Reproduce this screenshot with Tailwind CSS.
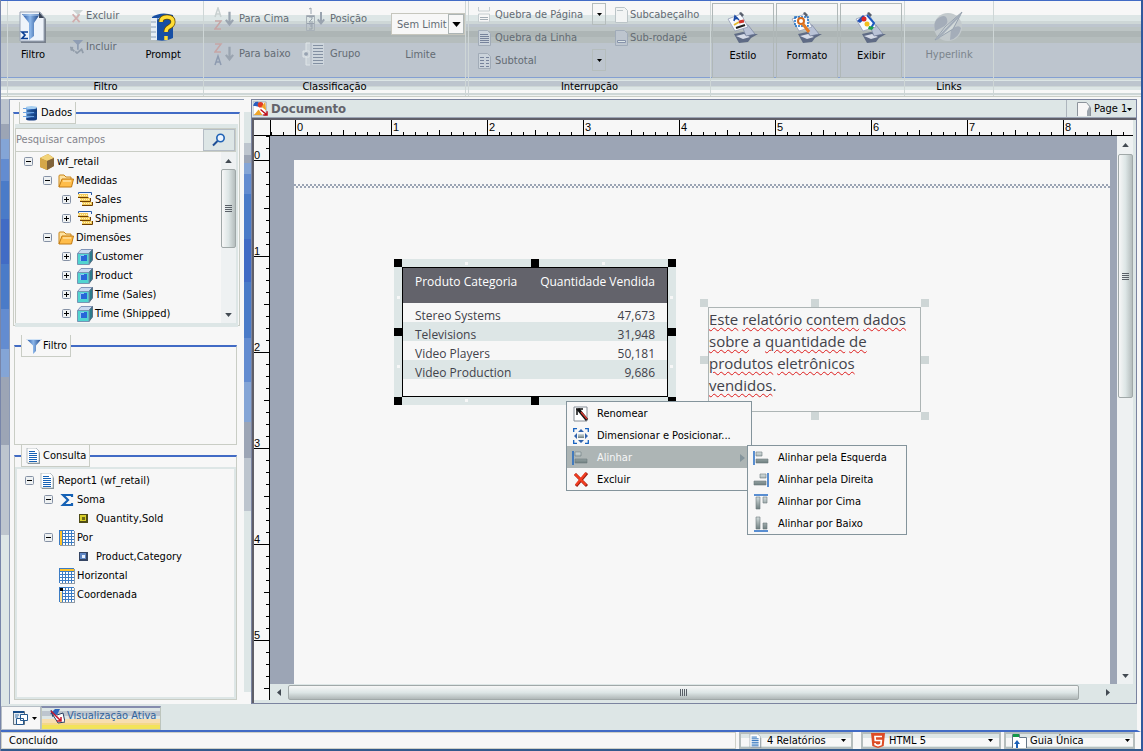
<!DOCTYPE html>
<html lang="pt-BR">
<head>
<meta charset="utf-8">
<title>Documento</title>
<script src="https://cdn.jsdelivr.net/npm/@tailwindcss/browser@4"></script>
</head>
<body class="h-screen overflow-hidden bg-[#dde6e6] font-['DejaVu_Sans_Condensed','Noto_Sans',sans-serif] text-[11px] leading-[14px] text-black">

<svg class="absolute size-0" aria-hidden="true">
  <defs>
    <linearGradient id="metal" x1="0" y1="0" x2="0" y2="1"><stop offset="0" stop-color="#d3dcdc"/><stop offset="1" stop-color="#6f7f80"/></linearGradient>
    <linearGradient id="funnel" x1="0" x2="1"><stop offset="0" stop-color="#1d4f9e"/><stop offset=".45" stop-color="#8db7ea"/><stop offset="1" stop-color="#123c80"/></linearGradient>
    <linearGradient id="drum" x1="0" x2="1"><stop offset="0" stop-color="#7fb2ea"/><stop offset=".5" stop-color="#2b66b5"/><stop offset="1" stop-color="#123c80"/></linearGradient>
    <symbol id="minus" viewBox="0 0 9 9"><rect x=".5" y=".5" width="8" height="8" rx="1" fill="#eef1f2" stroke="#8591a5"/><path d="M2 4.500h5" stroke="#000"/></symbol>
    <symbol id="plus" viewBox="0 0 9 9"><rect x=".5" y=".5" width="8" height="8" rx="1" fill="#eef1f2" stroke="#8591a5"/><path d="M2 4.500h5M4.500 2v5" stroke="#000"/></symbol>
    <symbol id="folder" viewBox="0 0 16 16"><path d="M1 14V3q0-1 1-1h4l2 2h5v3" fill="#ffe2a0" stroke="#c98518"/><path d="M1 14 4 6h11.500l-2 8z" fill="#ffbd4a" stroke="#c27a12"/><path d="m5 8h8" stroke="#fff0c8"/></symbol>
    <symbol id="measure" viewBox="0 0 16 16"><path d="M1.500 3V.5h13V3" fill="none" stroke="#2a5ba8"/><path d="M1 2h10v4H1zM3 6h10v4H3zM5 10h10v4H5z" fill="#f2cb5c"/><path d="M1 3.500h10M3 7.500h10M5 11.500h10" stroke="#fff6c4" stroke-dasharray="1 1"/><path d="M1 5.500h10.500M3 9.500h10.500V6M5 13.500h10.500V10" fill="none" stroke="#6e3e00"/></symbol>
    <symbol id="cube" viewBox="0 0 16 16"><path d="M.5 4.500 4 .5h11.500L12 4.500z" fill="#c9d9f0" stroke="#8195b8"/><path d="m12 4.500 3.500-4v10.500L12 15.500z" fill="#2c7b8c" stroke="#5c7186"/><path d="M.5 4.500H12v11H.5z" fill="#51d4d0" stroke="#7795b4"/><path d="M3 6h7v6H3z" fill="#2866d8"/><path d="M3.500 12V6.500H7" fill="none" stroke="#8fc8f5"/></symbol>
    <symbol id="page" viewBox="0 0 16 16"><path d="M2 1h8l4 4v11H2z" fill="#8b979f"/><path d="M1 0h9l3 3v12H1z" fill="#fff" stroke="#8b98a0" stroke-width=".6"/><path d="M3 3.500h6M3 5.500h8M3 7.500h8M3 9.500h8M3 11.500h8M3 13.500h8" stroke="#1561b5"/></symbol>
    <symbol id="grid" viewBox="0 0 16 16"><path d="M1 1h15v15H1z" fill="#8f9aa6"/><path d="M0 0h15v15H0z" fill="#3c7cc4"/><path d="M1 2h14M1 5h14M1 8h14M1 11h14M1 14h14" stroke="#fff" stroke-width="2" stroke-dasharray="2 1"/></symbol>
    <symbol id="funnelIcon" viewBox="0 0 16 16"><path d="M.5 1h15L10 7.500V13l-3 3V7.500z" fill="url(#funnel)"/><path d="M1 1.500h14" stroke="#cfe2f6"/></symbol>
    <symbol id="down" viewBox="0 0 5 3"><path d="M0 0h5L2.500 3z"/></symbol>
    <symbol id="alignL" viewBox="0 0 16 16"><path d="M1 1v14" stroke="#1561c0" stroke-width="1.400"/><path d="M3 2h6v4H3zM3 9h12v4H3z" fill="url(#metal)" stroke="#6b7b7c" stroke-width=".6"/></symbol>
    <symbol id="tool" viewBox="0 0 32 32"><path d="m7 22 9-2 7 2 8 0-7 4-3 4-9 1z" fill="#5f6b85"/><path d="m9 24 8-2 6 3-7 2z" fill="#d7dce8"/><path d="m15 14 6-1 7 9-9 2z" fill="#b9c2d6" stroke="#6f7b98" stroke-width=".6"/><path d="m1 7 13-5 7 13L8 19z" fill="#f8faff" stroke="#8994ae" stroke-width=".7"/><path d="m12 1 2-1 3 3-2 2z" fill="#59606e"/></symbol>
    <symbol id="sheet" viewBox="0 0 16 16"><path d="M1.500.5h9l3 3v12h-12z" fill="#cbd3db" stroke="#a1abb7"/></symbol>
    <symbol id="arrowDown" viewBox="0 0 10 16"><path d="M5 0v14M1 9l4 5 4-5" fill="none" stroke="#9aa4b0" stroke-width="2.500"/></symbol>
  </defs>
</svg>

<div class="flex h-full flex-col border-r-2 border-l border-r-[#31599c] border-l-[#7785a9]">

  <!-- Ribbon -->
  <header class="flex h-[97px] shrink-0 border-t border-t-[#416bc5] border-b border-b-[#c9cdc5] bg-[linear-gradient(#f7f7f7_0_14px,#dde6e6_14px_20px,#ced7d7_20px_23px,#bdc5ce_23px_26px,#bcc4c4_26px_30px,#adb5b5_30px_36px,#b5bdbd_36px_42px,#bdc5ce_42px_76px,#84a0d2_76px_77px,#ced7d7_77px_79px,#dde6e6_79px_80px,#bdc5ce_80px_85px,#ced7d7_85px_86px,#dde6e6_86px_89px,#f7f7f7_89px_92px,#ced7d7_92px_94px,#eef1f0_94px)] pl-[6px]">
    <section class="flex w-[197px] shrink-0 flex-col border-x border-[#ced6d6]">
      <div class="flex h-[79px]">
        <button class="flex w-[50px] flex-col items-center pt-[10px]">
          <svg class="h-8 w-[28px]" viewBox="0 0 28 32"><path d="M2 2h20l5 6v24H2z" fill="#78808c"/><path d="M1 1h20l4 6v23H1z" fill="#eef3fa" stroke="#98a3b5"/><path d="M20 1v6h5z" fill="#3a4556"/><path d="M3 3h18l-6 9v13l-5 4V12z" fill="url(#funnel)"/><path d="M4 4h16" stroke="#b9d4f2"/><path d="M9 21H3l3 3-3 3.500h6" fill="none" stroke="#0b3f95" stroke-width="1.700"/></svg>
          <span class="mt-[5px]">Filtro</span>
        </button>
        <div class="flex flex-col gap-[17px] pt-[8px] pl-[12px] text-[#636b73]">
          <button class="flex items-center gap-[2px]"><svg class="size-[14px]" viewBox="0 0 16 16"><path d="M3 1h12l-5 5v5H8V6z" fill="#ced6d6"/><path d="m3 6 8 9M11 6l-8 9" stroke="#d0aeae" stroke-width="2"/></svg>Excluir</button>
          <button class="flex items-center gap-[2px]"><svg class="size-[14px]" viewBox="0 0 16 16"><path d="M3 0h12l-5 5v6H8V5z" fill="#8f9db3"/><path d="m0 8 5 5M3 8l-2 4m5 1 2 2 6-5m-1 0 2 5" fill="none" stroke="#929daa" stroke-width="2"/></svg>Incluir</button>
        </div>
        <button class="ml-[19px] flex w-[50px] flex-col items-center pt-[10px]">
          <svg class="h-8 w-[28px]" viewBox="0 0 28 32"><path d="M3 6q9-6 21-2v23q-9 5-21 1z" fill="#174fa4"/><path d="M2 7h6v22H2z" fill="#e5edf5"/><path d="M2 11h5M2 16h5M2 21h5M2 26h5" stroke="#8ca1b8"/><path d="M8 8q10-4 16 0" stroke="#9fc5ee" fill="none"/><path d="M12 11q0-5 6-5 6 0 6 5 0 3-4 5-3 1.500-3 5" fill="none" stroke="#684d00" stroke-width="5"/><path d="M12 11q0-5 6-5 6 0 6 5 0 3-4 5-3 1.500-3 5M17 25v4" fill="none" stroke="#ffdd35" stroke-width="3.500"/></svg>
          <span class="mt-[5px]">Prompt</span>
        </button>
      </div>
      <h2 class="text-center">Filtro</h2>
    </section>

    <section class="flex w-[262px] shrink-0 flex-col border-r border-[#ced6d6]">
      <div class="flex h-[79px] text-[#636b73]">
        <div class="flex w-[98px] flex-col gap-[11px] pt-[6px] pl-[10px]">
          <button class="flex h-6 items-center gap-[5px] whitespace-nowrap"><svg class="h-6 w-5 shrink-0" viewBox="0 0 20 24"><path d="M1 10 4 1l3 9M2 7h4" fill="none" stroke="#c8d0d0" stroke-width="1.500"/><path d="M1 14h6l-6 8h6" fill="none" stroke="#c6a5a5" stroke-width="1.500"/><use href="#arrowDown" x="11" y="4" width="9" height="16"/></svg>Para Cima</button>
          <button class="flex h-6 items-center gap-[5px] whitespace-nowrap"><svg class="h-6 w-5 shrink-0" viewBox="0 0 20 24"><path d="M1 2h6l-6 8h6" fill="none" stroke="#c6a5a5" stroke-width="1.500"/><path d="m1 23 3-9 3 9m-5-3h4" fill="none" stroke="#8e9bb0" stroke-width="1.500"/><use href="#arrowDown" x="11" y="4" width="9" height="16"/></svg>Para baixo</button>
        </div>
        <div class="flex flex-col gap-[11px] pt-[6px]">
          <button class="flex h-6 items-center gap-[4px]"><svg class="h-6 w-6" viewBox="0 0 24 24"><path d="M5 9.500h7M5 16.500h7" stroke="#98a2ad"/><path d="M7 2 9 1v6m-2 3h3v2l-3 3h4m-4 2h3v2H8m2 0v3H7" fill="none" stroke="#98a2ad"/><path d="M4.500 8.500h8v15h-8z" fill="none" stroke="#a8b1b8"/><use href="#arrowDown" x="15" y="5" width="8" height="13"/></svg>Posição</button>
          <button class="flex h-6 items-center gap-[4px]"><svg class="h-6 w-6" viewBox="0 0 24 24"><path d="M8 1H4v22h4M1 9h6v6H1z" fill="#dfe5e8" fill-opacity=".4" stroke="#dfe5e8"/><path d="M10 1h12v22H10z" fill="#cdd5dc"/><path d="M11 3.500h10M11 6.500h10M11 9.500h10M11 12.500h10M11 15.500h10M11 18.500h10M11 21.500h10M2 12h4M4 10v4" stroke="#8390a2"/></svg>Grupo</button>
        </div>
        <div class="ml-auto flex w-[74px] flex-col gap-[13px] pt-[12px]">
          <label class="relative flex h-[22px] items-center border border-[#c6c6bd] bg-[#f7f7f7]">
            <select aria-label="Limite" class="h-full w-full appearance-none pt-px pl-[5px] text-[11px]"><option>Sem Limit</option></select>
            <span class="pointer-events-none absolute right-0 flex h-5 w-4 items-center justify-center border border-[#adb5b5] bg-[#f7f7f7]"><svg class="h-[5px] w-[9px] fill-black"><use href="#down"/></svg></span>
          </label>
          <span class="pr-[15px] text-center">Limite</span>
        </div>
      </div>
      <h2 class="text-center">Classificação</h2>
    </section>

    <section class="ml-[2px] flex w-[243px] shrink-0 flex-col border-x border-[#ced6d6]">
      <div class="flex h-[79px] text-[#636b73]">
        <div class="flex w-[123px] flex-col gap-[7px] pt-[6px] pl-[8px]">
          <button class="flex h-4 items-center gap-[2px] whitespace-nowrap"><svg class="size-4 shrink-0" viewBox="0 0 16 16"><path d="M1.500 0v4h11V0m-11 15V7h11v8z" fill="#f7f7f7" stroke="#c5cdd0"/><path d="M3 10.500h8M3 12.500h8" stroke="#a3adb5"/></svg>Quebra de Página</button>
          <button class="flex h-4 items-center gap-[2px] whitespace-nowrap"><svg class="size-4 shrink-0" viewBox="0 0 16 16"><use href="#sheet"/><path d="M3 4.500h8M3 6.500h9M3 8.500h9M3 10.500h9M3 12.500h9" stroke="#77839b"/></svg>Quebra da Linha</button>
          <button class="flex h-4 items-center gap-[2px] whitespace-nowrap"><svg class="size-4 shrink-0" viewBox="0 0 16 16"><use href="#sheet"/><path d="M3 4.500h4m2 0h3M3 7.500h4m2 0h3M3 10.500h4m2 0h3M3 13.500h4m2 0h3" stroke="#77839b"/></svg>Subtotal</button>
        </div>
        <div class="flex w-[14px] flex-col gap-6 pt-[2px]">
          <button aria-label="Opções de quebra de página" class="flex h-[22px] items-center justify-center border border-[#b5bdbd]"><svg class="h-[3px] w-[5px] fill-black"><use href="#down"/></svg></button>
          <button aria-label="Opções de subtotal" class="flex h-[22px] items-center justify-center border border-[#b5bdbd]"><svg class="h-[3px] w-[5px] fill-black"><use href="#down"/></svg></button>
        </div>
        <div class="flex flex-col gap-[7px] pt-[6px] pl-[8px]">
          <button class="flex h-4 items-center"><svg class="size-4" viewBox="0 0 16 16"><path d="M1.500.5h9l3 3v12h-12z" fill="#f2f4f4" stroke="#bcc5c8"/><path d="M3 3.500h6" stroke="#bcc5c8"/></svg>Subcabeçalho</button>
          <button class="flex h-4 items-center"><svg class="size-4" viewBox="0 0 16 16"><path d="M1.500.5h9l3 3v12h-12z" fill="#bdc5ce" stroke="#a0abb9"/><path d="M3.500 10.500h8v2h-8z" fill="#dde6e6" stroke="#8793aa"/></svg>Sub-rodapé</button>
        </div>
      </div>
      <h2 class="text-center">Interrupção</h2>
    </section>

    <div class="ml-[1px] flex h-[77px] shrink-0 gap-[2px] pt-[2px] pr-[2px]">
      <button class="flex w-[62px] flex-col items-center border border-[#b0b8b8] pt-[8px]">
        <svg class="h-8 w-8" viewBox="0 0 32 32"><use href="#tool"/><path d="m7 9 1-5 4 4M8 7l3-1" stroke="#1646a2" stroke-width="1.500" fill="none"/><path d="m7 13 5-3" stroke="#e5b92c" stroke-width="2"/><path d="m12 10 5-1" stroke="#d1352c" stroke-width="3"/><path d="m9 16 9-3" stroke="#222" stroke-width="2"/></svg>
        <span class="mt-[5px]">Estilo</span></button>
      <button class="flex w-[62px] flex-col items-center border border-[#b0b8b8] pt-[8px]">
        <svg class="h-8 w-8" viewBox="0 0 32 32"><use href="#tool"/><path d="M4 5h13v9H4z" fill="none" stroke="#1b6fc4" stroke-width="1.500" stroke-dasharray="2 1"/><circle cx="10" cy="9" r="3" fill="#fff" stroke="#d66b1d" stroke-width="2"/><path d="m12 12 6 8" stroke="#e47b25" stroke-width="3"/></svg>
        <span class="mt-[5px]">Formato</span></button>
      <button class="flex w-[62px] flex-col items-center border border-[#b0b8b8] pt-[8px]">
        <svg class="h-8 w-8" viewBox="0 0 32 32"><use href="#tool"/><path d="m2 9 6-6 3 3-6 5z" fill="#1f4fb5"/><circle cx="9" cy="7" r="2.500" fill="#dc2525"/><circle cx="12" cy="12" r="2.500" fill="#f3bf1e"/><path d="m12 3 7 8-3 5" fill="none" stroke="#1c59c1" stroke-width="2"/><path d="m14 14 5 1-2 3-4-1z" fill="#1da54a"/></svg>
        <span class="mt-[5px]">Exibir</span></button>
    </div>

    <section class="flex w-[90px] shrink-0 flex-col border-x border-[#ced6d6]">
      <div class="h-[79px]">
        <button class="flex w-full flex-col items-center pt-[10px] text-[#7b848c]">
          <svg class="h-8 w-8" viewBox="0 0 32 32"><circle cx="15" cy="16" r="14" fill="#c3cacd"/><path d="M4 8q8-6 10 0t-6 9l-6 3Q0 12 4 8zm14 10q8-5 10-1-2 10-11 12z" fill="#a4adb9"/><path d="M2 29 12 16 29 1l-9 17z" fill="#d3dada" stroke="#97a2b0"/><path d="M4 28 27 4" stroke="#a3adb9" stroke-width="2"/></svg>
          <span class="mt-[5px]">Hyperlink</span></button>
      </div>
      <h2 class="text-center">Links</h2>
    </section>
  </header>

  <main class="flex min-h-0 flex-1 bg-[#f7f7f7] pt-[2px] pr-[4px]">
    <div class="w-[8px] shrink-0 bg-[linear-gradient(#bdc5ce_0_25px,#9ca5b5_25px_40px,#84a5d6_40px_60px,#638cd0_60px_82px,#4a7bc8_82px_120px,#416bc5_120px_165px,#4a7bc8_165px_210px,#638cd0_210px_250px,#84a5d6_250px_278px,#9ca5b5_278px_346px,#bdc5ce_346px_436px,#dde6e6_436px)]"></div>

    <!-- Object and query panels -->
    <aside class="flex w-[235px] shrink-0 flex-col border-t border-l border-[#8c9ab5] bg-[#f7f7f7] pt-[2px] pr-[4px] pb-[4px] pl-[3px]">
      <fieldset class="flex h-[224px] min-w-0 flex-col border border-t-2 border-[#c9cdc5] border-t-[#416bc5] px-px pb-px">
        <legend class="ml-[4px] flex h-[22px] items-center gap-[2px] border border-t-0 border-[#c9cdc5] bg-[#f7f7f7] pr-[3px] pl-[3px]"><svg class="size-4" viewBox="0 0 16 16"><path d="M3 2h11v12H3z" fill="url(#drum)"/><path d="M0 3.500h11M0 7.500h11M0 11.500h11" stroke="#6da2df"/><ellipse cx="8.500" cy="2.500" rx="5.500" ry="1.500" fill="#a7ceef"/><ellipse cx="8.500" cy="14" rx="5.500" ry="1.500" fill="#163f86"/><path d="M4 6h10M4 10h10" stroke="#12396f"/></svg>Dados</legend>
        <div class="flex min-h-0 flex-1 flex-col border-t-4 border-r-2 border-b-4 border-[#dde6e6]">
          <div class="flex h-6 shrink-0 border border-[#c9cdc5]">
            <input aria-label="Pesquisar campos" placeholder="Pesquisar campos" class="min-w-0 flex-1 text-[11px] placeholder:text-[#84848c]">
            <button aria-label="Pesquisar" class="flex w-8 items-center justify-center border border-[#b5bdc5] bg-[#dde6e6]"><svg class="size-[14px]" viewBox="0 0 14 14"><circle cx="8.500" cy="5" r="3.700" fill="#eaf4ff" stroke="#1f62b5" stroke-width="1.600"/><path d="M5.500 8 1 12.500" stroke="#1f4f95" stroke-width="2"/></svg></button>
          </div>
          <div class="flex min-h-0 flex-1">
            <ul class="flex-1 border-l border-[#c9cdc5] pl-[8px]">
              <li class="flex h-[19px] items-center"><svg class="size-[9px]"><use href="#minus"/></svg><svg class="ml-[6px] size-4" viewBox="0 0 16 16"><path d="m1 4 8-4 6 4v8l-7 4-7-3z" fill="#b78930"/><path d="m1 4 8-4 6 4-7 3z" fill="#f2d379"/><path d="m1 4 7 3v9l-7-3z" fill="#d5a748"/><path d="M8 7v9l7-4V4z" fill="#80633a"/></svg><span class="ml-[2px]">wf_retail</span></li>
              <li class="ml-[19px] flex h-[19px] items-center"><svg class="size-[9px]"><use href="#minus"/></svg><svg class="ml-[6px] size-4"><use href="#folder"/></svg><span class="ml-[2px]">Medidas</span></li>
              <li class="ml-[38px] flex h-[19px] items-center"><svg class="size-[9px]"><use href="#plus"/></svg><svg class="ml-[6px] size-4"><use href="#measure"/></svg><span class="ml-[2px]">Sales</span></li>
              <li class="ml-[38px] flex h-[19px] items-center"><svg class="size-[9px]"><use href="#plus"/></svg><svg class="ml-[6px] size-4"><use href="#measure"/></svg><span class="ml-[2px]">Shipments</span></li>
              <li class="ml-[19px] flex h-[19px] items-center"><svg class="size-[9px]"><use href="#minus"/></svg><svg class="ml-[6px] size-4"><use href="#folder"/></svg><span class="ml-[2px]">Dimensões</span></li>
              <li class="ml-[38px] flex h-[19px] items-center"><svg class="size-[9px]"><use href="#plus"/></svg><svg class="ml-[6px] size-4"><use href="#cube"/></svg><span class="ml-[2px]">Customer</span></li>
              <li class="ml-[38px] flex h-[19px] items-center"><svg class="size-[9px]"><use href="#plus"/></svg><svg class="ml-[6px] size-4"><use href="#cube"/></svg><span class="ml-[2px]">Product</span></li>
              <li class="ml-[38px] flex h-[19px] items-center"><svg class="size-[9px]"><use href="#plus"/></svg><svg class="ml-[6px] size-4"><use href="#cube"/></svg><span class="ml-[2px]">Time (Sales)</span></li>
              <li class="ml-[38px] flex h-[19px] items-center"><svg class="size-[9px]"><use href="#plus"/></svg><svg class="ml-[6px] size-4"><use href="#cube"/></svg><span class="ml-[2px]">Time (Shipped)</span></li>
            </ul>
            <div class="flex w-[15px] flex-col items-center bg-[#eef1f2]">
              <div class="flex h-[17px] items-center"><svg class="h-[4px] w-[7px] rotate-180 fill-[#424a52]"><use href="#down"/></svg></div>
              <div class="flex h-[79px] w-full flex-col items-center justify-center gap-px rounded-xs border border-[#a0a8a8] bg-linear-to-r from-[#f7f7f7] via-[#dde6e6] to-[#b5bdbd]"><i class="h-px w-[7px] bg-[#5a6068]"></i><i class="h-px w-[7px] bg-[#5a6068]"></i><i class="h-px w-[7px] bg-[#5a6068]"></i><i class="h-px w-[7px] bg-[#5a6068]"></i></div>
              <div class="mt-auto flex h-[17px] items-center"><svg class="h-[4px] w-[7px] fill-[#424a52]"><use href="#down"/></svg></div>
            </div>
          </div>
        </div>
      </fieldset>

      <fieldset class="mt-[9px] mr-[3px] ml-px flex h-[110px] min-w-0 flex-col border border-t-2 border-[#c9cdc5] border-t-[#416bc5]">
        <legend class="ml-[6px] flex h-[22px] items-center gap-px border border-t-0 border-[#c9cdc5] bg-[#f7f7f7] pr-[3px] pl-[4px]"><svg class="size-4"><use href="#funnelIcon"/></svg>Filtro</legend>
        <div class="flex-1 border-x-2 border-[#e6ecec]"></div>
      </fieldset>

      <fieldset class="mr-[3px] ml-px flex min-h-0 min-w-0 flex-1 flex-col border border-t-2 border-[#c9cdc5] border-t-[#416bc5]">
        <legend class="ml-[6px] flex h-[22px] items-center gap-px border border-t-0 border-[#c9cdc5] bg-[#f7f7f7] pr-[3px] pl-[4px]"><svg class="size-4"><use href="#page"/></svg>Consulta</legend>
        <div class="flex-1 border-2 border-[#dde6e6]">
          <ul class="pt-[2px] pl-[8px]">
            <li class="flex h-[19px] items-center"><svg class="size-[9px]"><use href="#minus"/></svg><svg class="ml-[6px] size-4"><use href="#page"/></svg><span class="ml-[2px]">Report1 (wf_retail)</span></li>
            <li class="ml-[19px] flex h-[19px] items-center"><svg class="size-[9px]"><use href="#minus"/></svg><svg class="ml-[6px] size-4" viewBox="0 0 16 16"><path d="M13 5V3H4l5 5-5 5h9v-2" fill="none" stroke="#1561b5" stroke-width="2.200"/></svg><span class="ml-[2px]">Soma</span></li>
            <li class="ml-[54px] flex h-[19px] items-center"><svg class="size-[9px]" viewBox="0 0 9 9"><path d="M0 0h9v9H0z" fill="#4f4b16"/><path d="M1 1h6v6H1z" fill="#d8cf2a"/><path d="M3 3h3v3H3z" fill="#6e6a15"/></svg><span class="ml-[8px]">Quantity,Sold</span></li>
            <li class="ml-[19px] flex h-[19px] items-center"><svg class="size-[9px]"><use href="#minus"/></svg><svg class="ml-[6px] size-4" viewBox="0 0 16 16"><use href="#grid"/><path d="M1 1h2v14H1z" fill="#ffc229"/></svg><span class="ml-[2px]">Por</span></li>
            <li class="ml-[54px] flex h-[19px] items-center"><svg class="size-[9px]" viewBox="0 0 9 9"><path d="M0 0h9v9H0z" fill="#354563"/><path d="M1 1h6v6H1z" fill="#5f86c4"/><path d="M3 3h3v3H3z" fill="#e5f0ff"/></svg><span class="ml-[8px]">Product,Category</span></li>
            <li class="ml-[34px] flex h-[19px] items-center"><svg class="size-4" viewBox="0 0 16 16"><use href="#grid"/><path d="M1 1h14v2H1z" fill="#ffc229"/></svg><span class="ml-[2px]">Horizontal</span></li>
            <li class="ml-[34px] flex h-[19px] items-center"><svg class="size-4" viewBox="0 0 16 16"><use href="#grid"/><path d="M1 1h3v3H1z"/><path d="M1 5h2v10H1z" fill="#ffe08a"/></svg><span class="ml-[2px]">Coordenada</span></li>
          </ul>
        </div>
      </fieldset>
    </aside>

    <div class="mt-[13px] mb-[12px] w-[7px] shrink-0 bg-[linear-gradient(#dde6e6_0_31px,#bdc5ce_31px_43px,#9ca5b5_43px_51px,#84a5d6_51px_62px,#638cd0_62px_82px,#4a7bc8_82px_127px,#416bc5_127px_170px,#4a7bc8_170px_226px,#638cd0_226px_270px,#84a5d6_270px_310px,#9ca5b5_310px_346px,#bdc5ce_346px_399px,#dde6e6_399px)]"></div>

    <!-- Document -->
    <section class="flex min-w-0 flex-1 flex-col border border-[#7b84a0] bg-[#dde6e6]">
      <div class="flex h-[18px] shrink-0 items-center border-b border-[#9ca5b5]">
        <svg class="ml-px size-[15px]" viewBox="0 0 16 16"><path d="M0 1h14v14H0z" fill="#fff" stroke="#a0a8b5"/><path d="M0 5q1-5 6-4v5z" fill="#285fc0"/><circle cx="8" cy="4" r="3" fill="#e23a24"/><path d="m13 1-4 5 5 4zM1 15l5-6 4 6z" fill="#f0a529"/><path d="m8 9 7 6m0-4v4h-4" fill="none" stroke="#c00c1a" stroke-width="1.500"/></svg>
        <h1 class="ml-[3px] text-[13px] font-bold text-[#63636b]">Documento</h1>
        <button class="ml-auto flex h-full w-[70px] items-center border-l border-[#adb5bd] pt-px pl-[10px] whitespace-nowrap"><svg class="mr-[2px] h-[14px] w-[15px] shrink-0" viewBox="0 0 15 14"><path d="M.5 14V.5h9l4 5V14" fill="#f7f7f7" stroke="#8c949c"/><path d="M13 3v11h-3V9z" fill="#9ca5ad"/></svg>Page 1<svg class="h-[3px] w-[5px] fill-black"><use href="#down"/></svg></button>
      </div>
      <div class="flex min-h-0 flex-1 flex-col border-t-2 border-l-2 border-[#5f5f69] pr-[3px] pb-[3px]">
        <svg class="block h-4 w-full shrink-0 bg-[#f7f7f7] font-['Liberation_Sans',sans-serif] text-[11px]">
          <defs>
            <pattern id="rulerX" x="41" y="0" width="96" height="16" patternUnits="userSpaceOnUse"><path d="M.5 0v16M12.500 12v4M24.500 12v4M36.500 12v4M48.500 10v6M60.500 12v4M72.500 12v4M84.500 12v4" stroke="#000"/></pattern>
            <pattern id="rulerY" x="0" y="24" width="16" height="96" patternUnits="userSpaceOnUse"><path d="M0 .5h16M12 12.500h4M12 24.500h4M12 36.500h4M10 48.500h6M12 60.500h4M12 72.500h4M12 84.500h4" stroke="#000"/></pattern>
          </defs>
          <rect x="17" width="100%" height="16" fill="url(#rulerX)"/>
          <path d="M0 15.500H2000M16.500 0v16" stroke="#000"/>
          <text x="43" y="11">0</text><text x="139" y="11">1</text><text x="235" y="11">2</text><text x="331" y="11">3</text><text x="427" y="11">4</text><text x="523" y="11">5</text><text x="619" y="11">6</text><text x="715" y="11">7</text><text x="811" y="11">8</text>
        </svg>
        <div class="flex min-h-0 flex-1">
          <svg class="h-full w-4 shrink-0 bg-[#f7f7f7] font-['Liberation_Sans',sans-serif] text-[11px]">
            <rect width="15" height="100%" fill="url(#rulerY)"/><path d="M15.500 0v2000" stroke="#000"/>
            <text x="0" y="23">0</text><text x="0" y="119">1</text><text x="0" y="215">2</text><text x="0" y="311">3</text><text x="0" y="407">4</text><text x="0" y="503">5</text>
          </svg>
          <div class="flex min-w-0 flex-1 flex-col">
            <div class="flex min-h-0 flex-1">
              <!-- Report canvas: objects are placed freely on it -->
              <div class="relative min-w-0 flex-1 overflow-hidden bg-[#9ca5b5] pt-6 pr-[7px] pl-6">
                <div class="h-full bg-[#f7f7f7] pt-6">
                  <svg class="block h-[4px] w-full"><defs><pattern id="margin" width="4" height="4" patternUnits="userSpaceOnUse"><path d="M0 0h2v2H0zM2 2h2v2H2z" fill="#9ca5b5"/></pattern></defs><rect width="100%" height="4" fill="url(#margin)"/></svg>
                </div>

                <div class="absolute top-[123px] left-[124px] w-[282px] bg-[#dde6e6] p-[8px]">
                  <div class="h-[130px] border border-black bg-[#f7f7f7]">
                    <table class="w-full border-collapse font-['Open_Sans','Noto_Sans',sans-serif] text-[12px] leading-[13px] font-medium text-[#42424a]">
                      <thead><tr class="h-[35px] bg-[#63636b] text-white"><th class="pt-[7px] pl-[12px] text-left align-top font-medium whitespace-nowrap">Produto Categoria</th><th class="pt-[7px] pr-[12px] text-right align-top font-medium whitespace-nowrap">Quantidade Vendida</th></tr></thead>
                      <tbody>
                        <tr class="h-[19px]"><td class="pt-[5px] pl-[12px]">Stereo Systems</td><td class="pt-[5px] pr-[12px] text-right">47,673</td></tr>
                        <tr class="h-[19px] bg-[#dde6e6]"><td class="pt-[5px] pl-[12px]">Televisions</td><td class="pt-[5px] pr-[12px] text-right">31,948</td></tr>
                        <tr class="h-[19px]"><td class="pt-[5px] pl-[12px]">Video Players</td><td class="pt-[5px] pr-[12px] text-right">50,181</td></tr>
                        <tr class="h-[19px] bg-[#dde6e6]"><td class="pt-[5px] pl-[12px]">Video Production</td><td class="pt-[5px] pr-[12px] text-right">9,686</td></tr>
                      </tbody>
                    </table>
                  </div>
                  <i class="absolute top-0 left-0 size-2 bg-black"></i><i class="absolute top-0 left-[137px] size-2 bg-black"></i><i class="absolute top-0 right-0 size-2 bg-black"></i>
                  <i class="absolute top-[69px] left-0 size-2 bg-black"></i><i class="absolute top-[69px] right-0 size-2 bg-black"></i>
                  <i class="absolute bottom-0 left-0 size-2 bg-black"></i><i class="absolute bottom-0 left-[137px] size-2 bg-black"></i><i class="absolute right-0 bottom-0 size-2 bg-black"></i>
                  <i class="absolute top-[3px] left-[71px] size-[3px] bg-[#f7f7f7]"></i><i class="absolute top-[3px] left-[208px] size-[3px] bg-[#f7f7f7]"></i><i class="absolute bottom-[3px] left-[71px] size-[3px] bg-[#f7f7f7]"></i>
                  <i class="absolute top-[37px] left-[3px] size-[3px] bg-[#f7f7f7]"></i><i class="absolute top-[106px] left-[3px] size-[3px] bg-[#f7f7f7]"></i><i class="absolute top-[37px] right-[3px] size-[3px] bg-[#f7f7f7]"></i><i class="absolute top-[106px] right-[3px] size-[3px] bg-[#f7f7f7]"></i>
                </div>

                <div class="absolute top-[171px] left-[438px] h-[105px] w-[213px] border border-[#adb5b5]">
                  <p class="font-['Open_Sans','Noto_Sans',sans-serif] text-[15px] leading-[22px] text-[#42424a]"><span class="underline decoration-[#dd1c1c] decoration-wavy decoration-1 underline-offset-2">Este</span> <span class="underline decoration-[#dd1c1c] decoration-wavy decoration-1 underline-offset-2">relatório</span> <span class="underline decoration-[#dd1c1c] decoration-wavy decoration-1 underline-offset-2">contem</span> <span class="underline decoration-[#dd1c1c] decoration-wavy decoration-1 underline-offset-2">dados</span><br><span class="underline decoration-[#dd1c1c] decoration-wavy decoration-1 underline-offset-2">sobre</span> a <span class="underline decoration-[#dd1c1c] decoration-wavy decoration-1 underline-offset-2">quantidade</span> <span class="underline decoration-[#dd1c1c] decoration-wavy decoration-1 underline-offset-2">de</span><br><span class="underline decoration-[#dd1c1c] decoration-wavy decoration-1 underline-offset-2">produtos</span> <span class="underline decoration-[#dd1c1c] decoration-wavy decoration-1 underline-offset-2">eletrônicos</span><br><span class="underline decoration-[#dd1c1c] decoration-wavy decoration-1 underline-offset-2">vendidos</span>.</p>
                  <i class="absolute -top-[9px] -left-[9px] size-2 bg-[#ced6d6]"></i><i class="absolute -top-[9px] left-[102px] size-2 bg-[#ced6d6]"></i><i class="absolute -top-[9px] -right-[9px] size-2 bg-[#ced6d6]"></i>
                  <i class="absolute top-[48px] -left-[9px] size-2 bg-[#ced6d6]"></i><i class="absolute top-[48px] -right-[9px] size-2 bg-[#ced6d6]"></i>
                  <i class="absolute -bottom-[9px] left-[102px] size-2 bg-[#ced6d6]"></i><i class="absolute -right-[9px] -bottom-[9px] size-2 bg-[#ced6d6]"></i>
                </div>

                <div role="menu" class="absolute top-[265px] left-[296px] w-[186px] border border-[#84949c] bg-[#f7f7f7]">
                  <button role="menuitem" class="flex h-[22px] w-full items-center gap-[8px] pt-px pl-[6px]"><svg class="size-4" viewBox="0 0 16 16"><path d="M1 1h13v14H1z" fill="#fff" stroke="#858d96"/><path d="M3 3h7M4 3v6" stroke="#111" stroke-width="1.500"/><path d="m5 3 9 11" stroke="#111" stroke-width="3"/><path d="m8 6 6 7" stroke="#d73b32" stroke-width="1.500"/></svg>Renomear</button>
                  <button role="menuitem" class="flex h-[22px] w-full items-center gap-[8px] pt-px pl-[6px] whitespace-nowrap"><svg class="size-4 shrink-0" viewBox="0 0 16 16"><path d="M.7 4V.7H4m8 0h3.300V4m0 8v3.300H12m-8 0H.7V12" fill="none" stroke="#1561c0" stroke-width="1.300"/><path d="m8 1 3 3H5zM8 15l3-3H5zM1 8l3-3v6zM15 8l-3-3v6z" fill="#2f62ad"/><path d="M5 6h6v4H5z" fill="url(#metal)"/></svg>Dimensionar e Posicionar...</button>
                  <button role="menuitem" class="flex h-[22px] w-full items-center gap-[8px] bg-[#adb5b5] pt-px pr-[6px] pl-[5px] text-[#f7f7f7]"><svg class="size-4"><use href="#alignL"/></svg><span class="pl-px">Alinhar</span><svg class="ml-auto h-[8px] w-[5px]" viewBox="0 0 5 8"><path d="M0 0v8l5-4z" fill="#84949c"/></svg></button>
                  <button role="menuitem" class="flex h-[22px] w-full items-center gap-[8px] pt-px pl-[6px]"><svg class="size-4" viewBox="0 0 16 16"><path d="m2 2 12 12M14 1 3 14" stroke="#9c1d12" stroke-width="3"/><path d="m2 2 11 11M13 1 3 13" stroke="#f33d20" stroke-width="2.200"/></svg>Excluir</button>
                </div>

                <div role="menu" class="absolute top-[309px] left-[477px] w-[160px] border border-[#84949c] bg-[#f7f7f7]">
                  <button role="menuitem" class="flex h-[22px] w-full items-center gap-[9px] pt-px pl-[5px]"><svg class="size-4"><use href="#alignL"/></svg>Alinhar pela Esquerda</button>
                  <button role="menuitem" class="flex h-[22px] w-full items-center gap-[9px] pt-px pl-[5px]"><svg class="size-4" viewBox="0 0 16 16"><path d="M15 1v14" stroke="#1561c0" stroke-width="1.400"/><path d="M7 2h6v4H7zM1 9h12v4H1z" fill="url(#metal)" stroke="#6b7b7c" stroke-width=".6"/></svg>Alinhar pela Direita</button>
                  <button role="menuitem" class="flex h-[22px] w-full items-center gap-[9px] pt-px pl-[5px]"><svg class="size-4" viewBox="0 0 16 16"><path d="M1 1h14" stroke="#1561c0" stroke-width="1.400"/><path d="M3 3h4v12H3zM10 3h4v6h-4z" fill="url(#metal)" stroke="#6b7b7c" stroke-width=".6"/></svg>Alinhar por Cima</button>
                  <button role="menuitem" class="flex h-[22px] w-full items-center gap-[9px] pt-px pl-[5px]"><svg class="size-4" viewBox="0 0 16 16"><path d="M1 15h14" stroke="#1561c0" stroke-width="1.400"/><path d="M3 1h4v12H3zM10 7h4v6h-4z" fill="url(#metal)" stroke="#6b7b7c" stroke-width=".6"/></svg>Alinhar por Baixo</button>
                </div>
              </div>
              <!-- Vertical scrollbar -->
              <div class="flex w-4 shrink-0 flex-col items-end bg-[#eef1f2] pl-px">
                <div class="flex h-[18px] w-full items-center justify-center"><svg class="h-[4px] w-[7px] rotate-180 fill-[#424a52]"><use href="#down"/></svg></div>
                <div class="flex h-[244px] w-full flex-col items-center justify-center gap-px rounded-xs border border-[#a0a8a8] bg-linear-to-r from-[#f7f7f7] via-[#dde6e6] to-[#b5bdbd]"><i class="h-px w-[7px] bg-[#5a6068]"></i><i class="h-px w-[7px] bg-[#5a6068]"></i><i class="h-px w-[7px] bg-[#5a6068]"></i><i class="h-px w-[7px] bg-[#5a6068]"></i></div>
                <div class="mt-auto flex h-[17px] w-full items-center justify-center"><svg class="h-[4px] w-[7px] fill-[#424a52]"><use href="#down"/></svg></div>
              </div>
            </div>
            <!-- Horizontal scrollbar -->
            <div class="flex h-4 shrink-0 items-center bg-[#dde6e6] pr-4">
              <div class="flex w-[18px] justify-center"><svg class="h-[7px] w-[4px]" viewBox="0 0 4 7"><path d="M4 0v7L0 3.500z" fill="#424a52"/></svg></div>
              <div class="flex h-[15px] flex-1 items-center justify-center gap-px rounded-xs border border-[#a0a8a8] bg-linear-to-b from-[#f7f7f7] via-[#dde6e6] to-[#b0b8b8]"><i class="h-[7px] w-px bg-[#5a6068]"></i><i class="h-[7px] w-px bg-[#5a6068]"></i><i class="h-[7px] w-px bg-[#5a6068]"></i><i class="h-[7px] w-px bg-[#5a6068]"></i></div>
              <div class="flex w-[38px] justify-end pr-[7px]"><svg class="h-[7px] w-[4px]" viewBox="0 0 4 7"><path d="M0 0v7l4-3.500z" fill="#424a52"/></svg></div>
            </div>
          </div>
        </div>
      </div>
    </section>
  </main>

  <!-- View tabs -->
  <nav class="flex h-[28px] shrink-0 border-r-4 border-b-2 border-r-[#f7f7f7] border-b-[#416bc5] bg-[#dde6e6] pt-[2px]">
    <button aria-label="Organizar janelas" class="flex w-10 items-center gap-[4px] border border-[#b5bdc5] bg-[#f7f7f7] pl-[10px]"><svg class="size-4" viewBox="0 0 16 16"><path d="M1.500 1.500h11v13h-11z" fill="#e5ecf2" stroke="#62717e"/><path d="M1 2h11" stroke="#174c88" stroke-width="2"/><path d="M8.500 4.500h7v6h-7zM4.500 8.500h7v6h-7z" fill="#fff" stroke="#24588e"/><path d="M3 5h4M3 7h3" stroke="#4076ad"/></svg><svg class="h-[3px] w-[5px] fill-black"><use href="#down"/></svg></button>
    <button class="flex w-[120px] items-start gap-[2px] border border-t-2 border-[#bdc5bd] border-t-[#848cad] bg-[linear-gradient(#dde6e6_0_3px,#bdc5ce_3px_8px,#dde6e6_8px_11px,#f7deb0_11px_15px,#f5d888_15px_17px,#f2e35a_17px)] pl-[7px] whitespace-nowrap text-[#31639c]"><svg class="size-4 shrink-0" viewBox="0 0 16 16"><path d="m1 6 5-5h5L8 7z" fill="#2e65bc"/><path d="m2 2 2 7m4-2 6-2 2 9-7 1-5-8" fill="#fff" stroke="#273e63"/><path d="m2 3 10 10m0-4v4H8" fill="none" stroke="#c5162c" stroke-width="1.500"/></svg><span class="pt-px">Visualização Ativa</span></button>
  </nav>

  <!-- Status bar -->
  <footer class="flex h-[19px] shrink-0 gap-[3px] border-b-2 border-[#31598c] bg-[#f7f7f7]">
    <div class="flex flex-1 items-center border border-[#ced0c8] pl-[7px]">Concluído</div>
    <label class="relative flex w-[114px] items-center border-2 border-[#b5bdbd] bg-[linear-gradient(#dde6e6_0_4px,#f7f7f7_4px_12px,#dde6e6_12px)]"><svg class="absolute left-[8px] size-[14px]"><use href="#page"/></svg><select aria-label="Relatórios" class="w-full appearance-none pt-px pl-[26px] text-[11px]"><option>4 Relatórios</option></select><svg class="pointer-events-none absolute right-[5px] h-[3px] w-[5px] fill-black"><use href="#down"/></svg></label>
    <label class="relative ml-[5px] flex w-[140px] items-center border-2 border-[#b5bdbd] bg-[linear-gradient(#dde6e6_0_4px,#f7f7f7_4px_12px,#dde6e6_12px)]"><svg class="absolute left-[8px] h-[15px] w-[14px]" viewBox="0 0 14 15"><path d="m0 0h14l-1.300 13L7 15l-5.700-2z" fill="#dd4b25"/><path d="M11 3.500H4l.3 4h6l-.4 4L7 12.500l-2.800-1-.2-1.500" fill="none" stroke="#fff" stroke-width="1.700"/></svg><select aria-label="Formato de saída" class="w-full appearance-none pt-px pl-[26px] text-[11px]"><option>HTML 5</option></select><svg class="pointer-events-none absolute right-[6px] h-[3px] w-[5px] fill-black"><use href="#down"/></svg></label>
    <label class="relative mr-[6px] flex w-[131px] items-center border-2 border-[#b5bdbd] bg-[linear-gradient(#dde6e6_0_4px,#f7f7f7_4px_12px,#dde6e6_12px)]"><svg class="absolute left-[6px] size-[15px]" viewBox="0 0 15 15"><path d="M.5 15V1.500h7v3h7V15" fill="#fff" stroke="#667788"/><path d="M1 1h6v3H1z" fill="#14994a"/><path d="M5 7 2 11h2v4h2v-4h2z" fill="#1c61b8"/></svg><select aria-label="Guia" class="w-full appearance-none pt-px pl-[24px] text-[11px]"><option>Guia Única</option></select><svg class="pointer-events-none absolute right-[3px] h-[3px] w-[5px] fill-black"><use href="#down"/></svg></label>
  </footer>
</div>
</body>
</html>
